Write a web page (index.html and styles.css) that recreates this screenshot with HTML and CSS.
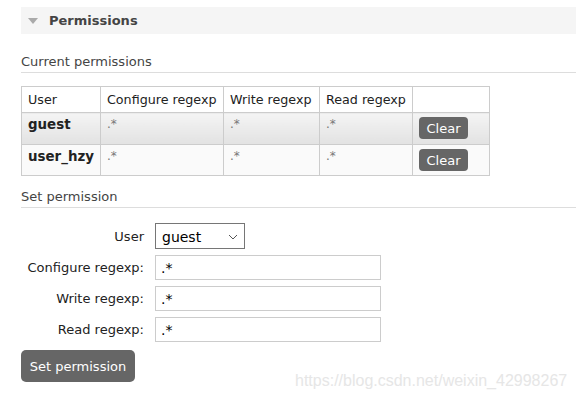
FILE: index.html
```html
<!DOCTYPE html>
<html lang="en">
<head>
  <meta charset="UTF-8">
  <title>Permissions</title>
  <link rel="stylesheet" href="styles.css">
</head>
<body>
  <div class="section">
    <h2 class="section-title"><span class="arrow"></span>Permissions</h2>

    <h3>Current permissions</h3>
    <table class="list">
      <thead>
        <tr>
          <th class="c-user">User</th>
          <th class="c-conf">Configure regexp</th>
          <th class="c-write">Write regexp</th>
          <th class="c-read">Read regexp</th>
          <th class="c-act"></th>
        </tr>
      </thead>
      <tbody>
        <tr class="alt1">
          <td class="user">guest</td>
          <td class="re">.*</td>
          <td class="re">.*</td>
          <td class="re">.*</td>
          <td class="act"><button class="small">Clear</button></td>
        </tr>
        <tr class="alt2">
          <td class="user">user_hzy</td>
          <td class="re">.*</td>
          <td class="re">.*</td>
          <td class="re">.*</td>
          <td class="act"><button class="small">Clear</button></td>
        </tr>
      </tbody>
    </table>

    <h3 class="set">Set permission</h3>
    <form class="form">
      <div class="row">
        <label>User</label>
        <div class="select">guest<svg width="10" height="6" viewBox="0 0 10 6"><path d="M1 1l4 4 4-4" fill="none" stroke="#555" stroke-width="1"/></svg></div>
      </div>
      <div class="row">
        <label>Configure regexp:</label>
        <input type="text" value=".*">
      </div>
      <div class="row">
        <label>Write regexp:</label>
        <input type="text" value=".*">
      </div>
      <div class="row">
        <label>Read regexp:</label>
        <input type="text" value=".*">
      </div>
      <div class="submit-row">
        <button type="button" class="big">Set permission</button>
        <span class="watermark">https://blog.csdn.net/weixin_42998267</span>
      </div>
    </form>
  </div>
</body>
</html>
```

FILE: styles.css
```css
* {
  margin: 0;
  padding: 0;
  box-sizing: border-box;
}

body {
  font-family: "DejaVu Sans", Verdana, sans-serif;
  font-size: 13px;
  color: #222;
  background: white;
  padding: 7px 0 0 21px;
}

.section-title {
  display: flex;
  align-items: center;
  height: 27px;
  background: #f5f5f5;
  font-size: 13px;
  font-weight: bold;
  color: #444;
  padding-left: 7px;
}

.arrow {
  width: 0;
  height: 0;
  border-left: 5px solid transparent;
  border-right: 5px solid transparent;
  border-top: 6px solid #aaa;
  margin-right: 11px;
}

h3 {
  font-size: 13px;
  font-weight: normal;
  color: #444;
  line-height: 15px;
  margin-top: 20px;
  padding-bottom: 3px;
  border-bottom: 1px solid #ddd;
}

h3.set {
  margin-top: 13px;
}

table.list {
  border-collapse: collapse;
  table-layout: fixed;
  margin-top: 13px;
}

table.list th,
table.list td {
  border: 1px solid #ccc;
  text-align: left;
  vertical-align: top;
  padding: 4px 6px;
  white-space: nowrap;
}

table.list th {
  font-weight: normal;
  font-size: 12.7px;
  height: 26px;
  padding-top: 5px;
}

.c-user { width: 79px; }
.c-conf { width: 123px; }
.c-write { width: 96px; }
.c-read { width: 93px; }
.c-act { width: 77px; }

tr.alt1 td {
  background: linear-gradient(#f4f4f4, #e2e2e2);
  height: 32px;
}

tr.alt2 td {
  background: #fafafa;
  height: 31px;
}

td.user {
  font-weight: bold;
  font-size: 13.4px;
}

td.re {
  color: #777;
  font-size: 12px;
}

td.act {
  padding: 3px 5px;
}

button {
  font-family: inherit;
  background: #666;
  color: white;
  border: none;
  cursor: pointer;
}

button.small {
  display: block;
  font-size: 13px;
  width: 49px;
  height: 22px;
  border-radius: 4px;
}

.form {
  margin-top: 15px;
}

.row {
  display: flex;
  align-items: center;
  margin-bottom: 6px;
}

.row label {
  width: 123px;
  text-align: right;
  font-size: 13px;
}

.select {
  margin-left: 11px;
  width: 90px;
  height: 26px;
  border: 1px solid #767676;
  display: flex;
  align-items: center;
  justify-content: space-between;
  padding: 2px 6px 0 6px;
  font-size: 14px;
  color: #000;
}

.row input {
  margin-left: 11px;
  width: 226px;
  height: 25px;
  border: 1px solid #ccc;
  font-family: inherit;
  font-size: 14px;
  padding: 0 5px;
  color: #000;
}

.submit-row {
  display: flex;
  align-items: flex-start;
  margin-top: 8px;
}

button.big {
  font-size: 13px;
  width: 114px;
  height: 32px;
  border-radius: 5px;
}

.watermark {
  font-family: "Liberation Sans", Arial, sans-serif;
  font-size: 16px;
  color: #e6e6e6;
  margin-left: 160px;
  margin-top: 22px;
}
```
